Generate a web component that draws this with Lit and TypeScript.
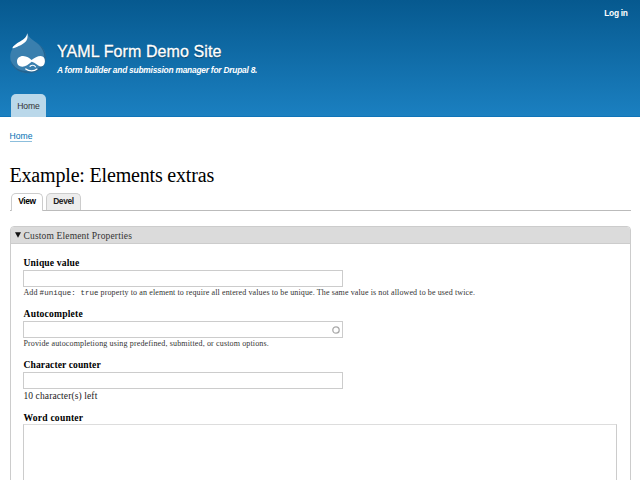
import { LitElement, html, css, svg, nothing } from "lit";
import { customElement, property } from "lit/decorators.js";

const drop = svg`
  <path d="M17.5 .3 C18.4 4 20.5 5.5 24.5 8.2 C31 12.2 36 17 36 24.5 C36 34 28.4 40.3 18.3 40.3 C8 40.3 .2 33.5 .2 23.8 C.2 16.5 5.5 11 10.5 8.2 C14.3 5.9 16.4 4 17.5 .3Z" fill="#3a7fae"/>
  <path d="M24.5 8.2 C31 12.2 36 17 36 24.5 C36 34 28.4 40.3 18.3 40.3 C9 40.3 2.2 35 .6 27.5 C4 35 10 38.2 18 38.2 C27 38.2 34.3 33 34.3 24 C34.3 17 30 12 24.5 8.2Z" fill="#1f5f8d" opacity=".85"/>
  <path d="M17.3 .3 C16.6 4 14.6 6 10.5 8.3 C6 10.8 2.8 13.2 2.3 15.3 C3.2 15.6 7.5 13.7 11.5 11.7 C15.8 9.5 18.6 6.5 17.3 .3Z" fill="#fff"/>
  <path d="M21.7 28.8 C18.8 31.3 15.5 33.8 12.3 33.8 C9 33.8 7 31.6 7 28.6 C7 25.4 9.4 23.1 13 23.1 C17 23.1 19.3 25.4 21.5 27 C24.5 25 27.5 23 30.7 23 C33.6 23 34.9 25.2 34.9 28 C34.9 31 33.6 33.4 31 33.4 C27.7 33.4 25.3 29.6 21.7 28.8Z" fill="#fff"/>
  <path d="M20.1 33.3 C21.6 31.9 24.3 31.7 25.4 33.8" fill="none" stroke="#fff" stroke-width="1.2" stroke-linecap="round"/>
  <path d="M15.8 36 C19 38.7 24.3 38.5 27 36.1" fill="none" stroke="#fff" stroke-width="1.3" stroke-linecap="round"/>`;

@customElement("form-field")
class FormField extends LitElement {
  @property() label = "";
  @property({ type: Boolean }) throbber = false;
  @property({ type: Boolean }) multiline = false;

  static styles = css`
    :host { display: block; }
    .label { font: bold 9.6px/12px "Liberation Serif", serif; letter-spacing: var(--label-gap, 0.15px); color: #000; height: 13px; padding-left: 0.5px; white-space: nowrap; }
    .label.tight { height: 12px; }
    .input { box-sizing: border-box; width: 320px; height: 17px; border: 1px solid #ccc; background: #fff; display: flex; align-items: center; justify-content: flex-end; padding-right: 2px; }
    .ring { width: 8px; height: 8px; }
    .area { box-sizing: border-box; width: 594px; height: 80px; border: 1px solid #ccc; border-top-color: #ddd; background: #fff; }
  `;

  render() {
    return html`
      <div class="label ${this.multiline ? "tight" : ""}">${this.label}</div>
      ${this.multiline
        ? html`<div class="area"></div>`
        : html`<div class="input">${this.throbber
            ? html`<svg class="ring" viewBox="0 0 8 8"><circle cx="4" cy="4" r="3.2" fill="none" stroke="#aaa" stroke-width="1.3"/></svg>`
            : nothing}</div>`}
      <slot></slot>`;
  }
}

@customElement("app-root")
class AppRoot extends LitElement {
  static styles = css`
    :host { display: block; width: 640px; height: 480px; overflow: hidden; background: #fff; font-family: "Liberation Serif", serif; color: #3b3b3b; }
    header { box-sizing: border-box; height: 117px; padding: 0 10px; background: linear-gradient(#06598f, #1b80c1); box-shadow: inset 0 -1px #0f74b8; display: flex; flex-direction: column; font-family: "Liberation Sans", sans-serif; color: #fff; }
    .account { align-self: flex-end; height: 33px; padding: 7px 2.5px 0 0; box-sizing: border-box; font-size: 8.4px; line-height: 12px; font-weight: bold; letter-spacing: -0.32px; }
    .brand { display: flex; height: 61px; gap: 10px; }
    .logo { width: 37px; height: 41px; flex: none; }
    .name { font-size: 16px; line-height: 20px; letter-spacing: 0.09px; margin-top: 9px; text-shadow: 0 1px 1px rgba(0, 0, 0, 0.5); white-space: nowrap; -webkit-text-stroke: 0.3px #fff; }
    .slogan { font-size: 8.4px; line-height: 12px; font-weight: bold; font-style: italic; letter-spacing: -0.229px; margin-top: 1.5px; white-space: nowrap; }
    .menu { display: flex; }
    .menu-item { box-sizing: border-box; width: 35px; height: 23px; margin-left: 1px; border-radius: 5px 5px 0 0; background: #bad8ea; color: #333; font-size: 8.6px; line-height: 24px; text-align: center; letter-spacing: -0.05px; }
    main { padding: 0 9.5px; }
    .crumb { height: 48px; padding-top: 14px; box-sizing: border-box; font: 8.6px/10px "Liberation Sans", sans-serif; }
    .crumb span { display: inline-block; color: #0071b3; border-bottom: 1px solid #8cbedc; }
    h1 { margin: 0; font-weight: normal; font-size: 20px; line-height: 20px; letter-spacing: -0.18px; color: #000; white-space: nowrap; height: 28px; }
    .tabs { display: flex; gap: 3px; padding-left: 1.5px; height: 18px; box-sizing: border-box; border-bottom: 1px solid #bbb; }
    .tab { box-sizing: border-box; height: 17px; border: 1px solid #ccc; border-bottom: 0; border-radius: 5px 5px 0 0; background: #ededed; font: bold 8.4px/15px "Liberation Sans", sans-serif; letter-spacing: -0.33px; color: #222; text-align: center; width: 35px; }
    .tab.active { width: 32px; height: 18px; background: #fff; color: #000; }
    .fieldset { margin-top: 15px; border: 1px solid #ccc; border-radius: 4px 4px 0 0; height: 270px; box-sizing: border-box; }
    .summary { display: flex; align-items: center; height: 16px; gap: 3px; padding-left: 4px; background: #dbdbdb; border-bottom: 1px solid #ccc; border-radius: 3px 3px 0 0; font-size: 9.5px; letter-spacing: 0.16px; color: #333; white-space: nowrap; }
    .summary span { padding-top: 1px; }
    .arrow { width: 6px; height: 6px; flex: none; }
    .fields { padding: 13px 0 0 12.5px; display: flex; flex-direction: column; }
    .unique { --label-gap: 0.15px; height: 51px; }
    .auto { --label-gap: 0.2px; height: 51px; }
    .chars { --label-gap: 0.09px; height: 53px; }
    .words { --label-gap: 0.21px; }
    .help { font-size: 8px; line-height: 12px; letter-spacing: 0.115px; white-space: nowrap; color: #333; display: flex; gap: 2.1px; padding-left: 0.4px; }
    .help.wide { letter-spacing: 0.147px; }
    code { font: 7.5px/13px "Liberation Mono", monospace; letter-spacing: 0.03px; }
    .count { font-size: 9.5px; line-height: 15px; letter-spacing: 0.113px; color: #222; padding-left: 0.4px; }
  `;

  render() {
    return html`
      <header>
        <div class="account">Log in</div>
        <div class="brand">
          <svg class="logo" viewBox="0 0 37 41">${drop}</svg>
          <div>
            <div class="name">YAML Form Demo Site</div>
            <div class="slogan">A form builder and submission manager for Drupal 8.</div>
          </div>
        </div>
        <nav class="menu"><div class="menu-item">Home</div></nav>
      </header>
      <main>
        <div class="crumb"><span>Home</span></div>
        <h1>Example: Elements extras</h1>
        <nav class="tabs">
          <div class="tab active">View</div>
          <div class="tab">Devel</div>
        </nav>
        <section class="fieldset">
          <div class="summary">
            <svg class="arrow" viewBox="0 0 6 6"><path d="M0 .3H6L3 5.8Z" fill="#111"/></svg>
            <span>Custom Element Properties</span>
          </div>
          <div class="fields">
            <form-field class="unique" label="Unique value">
              <div class="help"><span>Add</span><code>#unique: true</code><span>property to an element to require all entered values to be unique. The same value is not allowed to be used twice.</span></div>
            </form-field>
            <form-field class="auto" label="Autocomplete" throbber>
              <div class="help wide">Provide autocompletiong using predefined, submitted, or custom options.</div>
            </form-field>
            <form-field class="chars" label="Character counter">
              <div class="count">10 character(s) left</div>
            </form-field>
            <form-field class="words" label="Word counter" multiline></form-field>
          </div>
        </section>
      </main>`;
  }
}
